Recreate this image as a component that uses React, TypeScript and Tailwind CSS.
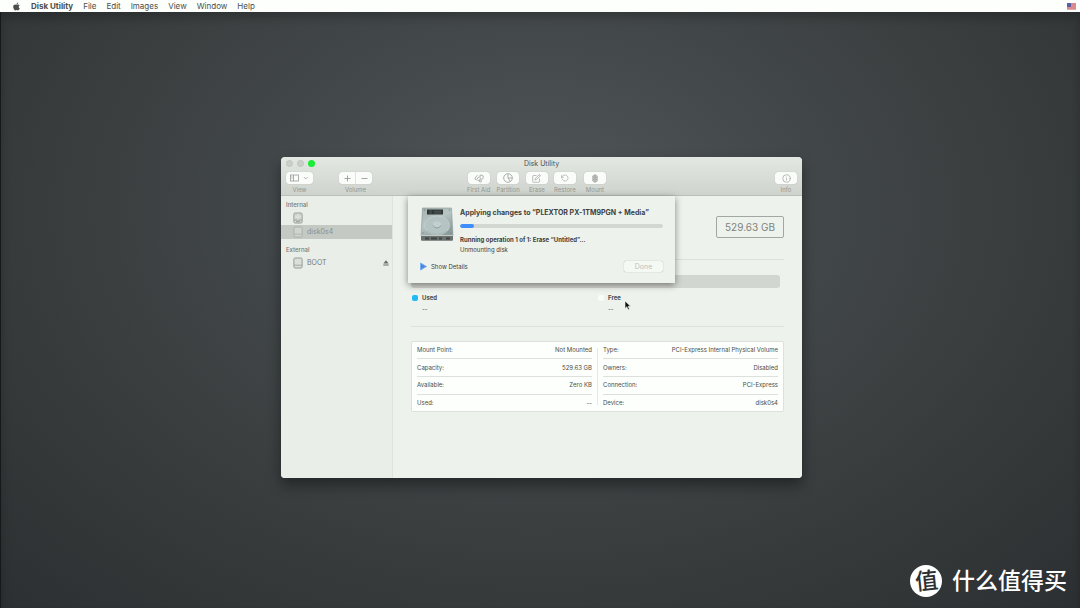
import React from "react";
import { FiRotateCcw, FiEdit, FiInfo } from "react-icons/fi";
import { FaApple } from "react-icons/fa";

const menus = ["File", "Edit", "Images", "View", "Window", "Help"];

const volumeInfo = [
  ["Mount Point:", "Not Mounted"],
  ["Capacity:", "529.63 GB"],
  ["Available:", "Zero KB"],
  ["Used:", "--"],
];

const deviceInfo = [
  ["Type:", "PCI-Express Internal Physical Volume"],
  ["Owners:", "Disabled"],
  ["Connection:", "PCI-Express"],
  ["Device:", "disk0s4"],
];

const DriveIcon: React.FC<{ internal?: boolean }> = ({ internal }) => (
  <svg width="10" height="12" viewBox="0 0 10 12" fill="none" stroke="#989c97">
    <rect x="0.9" y="1" width="8.2" height="10" rx="1.2" fill="#dce0da" />
    <path d="M1 8.2h8" strokeWidth="0.8" />
    {internal && <path d="M2.5 2.8h1M6.5 2.8h1M2.5 7h1M6.5 7h1M3 9.6h4" strokeWidth="0.9" />}
  </svg>
);

const HardDisk = () => (
  <svg width="34" height="35" viewBox="0 0 34 35">
    <defs>
      <linearGradient id="metal" x1="0" y1="0" x2="0.6" y2="1">
        <stop offset="0" stopColor="#a3b1af" />
        <stop offset="0.5" stopColor="#b7c6c4" />
        <stop offset="1" stopColor="#8b9d9c" />
      </linearGradient>
    </defs>
    <path d="M2.5 1h29L33 29H1z" fill="url(#metal)" stroke="#8b9694" strokeWidth="0.6" />
    <path d="M1 28.5h32v4.3q0 1-1 1H2q-1 0-1-1z" fill="#6a716f" />
    <path d="M1 28.5h32" stroke="#d2dad7" strokeWidth="0.8" />
    <path d="M5 31.5h4M11 31.5h6M19 31.5h3M26 31.5h4" stroke="#3f4544" strokeWidth="2" />
    <ellipse cx="17" cy="18.5" rx="12.5" ry="9.5" fill="#b4c4c2" stroke="#c9d5d2" strokeWidth="0.6" />
    <path d="M7 24q9 7 20 0" fill="none" stroke="#9fb0ae" strokeWidth="0.7" />
    <ellipse cx="17" cy="17.8" rx="4.4" ry="3.6" fill="#c2cfcc" />
    <path d="M12.8 18.5q4.2 5 8.4 0" fill="none" stroke="#869896" strokeWidth="0.9" />
    <rect x="7" y="2.5" width="16" height="5" fill="#303837" />
    <path d="M9 4h3M9 6h3M14 4.2h7M14 6h7" stroke="#5d6764" strokeWidth="0.7" />
    <g fill="#7d8784">
      <circle cx="4.5" cy="3" r="0.7" />
      <circle cx="29.5" cy="3" r="0.7" />
      <circle cx="3" cy="26" r="0.7" />
      <circle cx="31" cy="26" r="0.7" />
    </g>
  </svg>
);

const toolButton =
  "h-3 w-[22px] flex items-center justify-center rounded-[3px] bg-[#f9fcf8] text-[#a3a7a2] shadow-[0_0_1px_rgba(0,0,0,0.25)]";

const Tool: React.FC<{ label: string; children: React.ReactNode }> = ({ label, children }) => (
  <label className="flex flex-col items-center gap-0.5">
    <button className={toolButton}>{children}</button>
    <span className="text-[6px] leading-2 text-[#929691]">{label}</span>
  </label>
);

const InfoTable: React.FC<{ rows: string[][] }> = ({ rows }) => (
  <table className="h-[69px] w-full border-collapse">
    <tbody>
      {rows.map(([name, value]) => (
        <tr key={name} className="border-b border-[#dde1db] last:border-0">
          <th className="p-0 text-left font-normal">{name}</th>
          <td className="p-0 text-right">{value}</td>
        </tr>
      ))}
    </tbody>
  </table>
);

const MenuBar = () => (
  <nav className="h-3 px-3 flex items-center bg-[#fcfffb] text-[8px] leading-3 text-[#4b4e4b]">
    <FaApple size={9} className="text-[#4b4e4b]" />
    <a href="#" className="ml-2.5 font-bold">
      Disk Utility
    </a>
    <ul className="ml-2.5 flex gap-2.5">
      {menus.map((menu) => (
        <li key={menu}>
          <a href="#">{menu}</a>
        </li>
      ))}
    </ul>
    <svg width="9" height="7" viewBox="0 0 9 7" className="-mr-2 ml-auto">
      <rect width="9" height="7" fill="#e3a7aa" />
      <path d="M0 1h9M0 3h9M0 5h9" stroke="#cf6f78" />
      <rect width="4" height="4" fill="#5b5fa3" />
    </svg>
  </nav>
);

const Toolbar = () => (
  <header className="h-[39px] rounded-t-[4px] border-b border-[#bcc0ba] bg-gradient-to-b from-[#e4e8e2] to-[#cfd3cd]">
    <div className="h-[15px] px-[5px] pb-0.5 grid grid-cols-3 items-center">
      <div className="flex gap-1">
        <button aria-label="Close" className="size-[7px] rounded-full bg-[#cbcfca] border border-[#bfc3be]" />
        <button aria-label="Minimize" className="size-[7px] rounded-full bg-[#cbcfca] border border-[#bfc3be]" />
        <button aria-label="Zoom" className="size-[7px] rounded-full bg-[#18ee35]" />
      </div>
      <h1 className="text-center text-[7px] leading-3 text-[#4d504d]">Disk Utility</h1>
    </div>
    <div className="px-[5px] flex items-start">
      <label className="flex flex-col items-center gap-0.5">
        <button className="h-3 w-[27px] flex items-center justify-center gap-1 rounded-[3px] bg-[#f9fcf8] shadow-[0_0_1px_rgba(0,0,0,0.25)]">
          <svg width="19" height="8" viewBox="0 0 19 8" fill="none" stroke="#979b96" strokeWidth="0.8">
            <rect x="0.5" y="1" width="8" height="6" />
            <path d="M3.5 1v6M1.5 2.8h1M1.5 4.2h1M14 3.2l1.7 1.7 1.7-1.7" />
          </svg>
        </button>
        <span className="text-[6px] leading-2 text-[#929691]">View</span>
      </label>
      <label className="ml-[26px] flex flex-col items-center gap-0.5">
        <span className="h-3 flex rounded-[3px] bg-[#f9fcf8] shadow-[0_0_1px_rgba(0,0,0,0.25)]">
          <button aria-label="Add volume" className="w-[17px] flex items-center justify-center border-r border-[#dfe3dd]">
            <svg width="7" height="7" viewBox="0 0 7 7" stroke="#9a9e99" strokeWidth="0.9">
              <path d="M0.5 3.5h6M3.5 0.5v6" />
            </svg>
          </button>
          <button aria-label="Delete volume" className="w-4 flex items-center justify-center">
            <svg width="7" height="7" viewBox="0 0 7 7" stroke="#9a9e99" strokeWidth="0.9">
              <path d="M0.5 3.5h6" />
            </svg>
          </button>
        </span>
        <span className="text-[6px] leading-2 text-[#929691]">Volume</span>
      </label>
      <div className="ml-[95px] flex gap-1.5">
        <Tool label="First Aid">
          <svg width="10" height="9" viewBox="0 0 10 9" fill="none" stroke="currentColor" strokeWidth="0.9">
            <path d="M1 4.2L3.4 1.2M1 4.2q-.2 1.6 1.4 1.6M2.4 5.8L5 2.6M3.6 6.4q1.6.6 2-.9" />
            <path d="M6 1.2h1.5q2 0 1.8 2.2Q9 5 7.5 5.5M6 1.2v2.6q0 1 1.5 1.2" />
            <circle cx="6.3" cy="7" r="1.1" />
          </svg>
        </Tool>
        <Tool label="Partition">
          <svg width="10" height="10" viewBox="0 0 10 10" fill="none" stroke="currentColor" strokeWidth="0.9">
            <circle cx="5" cy="5" r="4.3" />
            <path d="M5 0.7V5h4.3M5 5l2.2 3.4" />
          </svg>
        </Tool>
        <Tool label="Erase">
          <FiEdit size={9} />
        </Tool>
        <Tool label="Restore">
          <FiRotateCcw size={8} />
        </Tool>
        <div className="ml-0.5">
          <Tool label="Mount">
            <svg width="6" height="9" viewBox="0 0 6 9" fill="#c3c7c2" stroke="currentColor" strokeWidth="0.7">
              <path d="M3 0.6L5.3 2v5L3 8.4 0.7 7V2zM1 3.2h4M1 5.2h4M3 1v7" />
            </svg>
          </Tool>
        </div>
      </div>
      <div className="ml-auto">
        <Tool label="Info">
          <FiInfo size={9} />
        </Tool>
      </div>
    </div>
  </header>
);

const Sidebar = () => (
  <aside className="w-28 shrink-0 border-r border-[#e0e4de] bg-[#eaeee8] pt-[5px] text-[7px] text-[#757975]">
    <h2 className="px-[5px] text-[6px] leading-2 font-medium">Internal</h2>
    <ul className="pt-0.5">
      <li className="h-[14px] px-3 flex items-center">
        <DriveIcon internal />
      </li>
      <li className="h-[14px] px-3 flex items-center gap-1 bg-[#c5c9c4] text-[#8b8f8a]">
        <span className="opacity-50">
          <DriveIcon />
        </span>
        disk0s4
      </li>
    </ul>
    <h2 className="mt-[7px] px-[5px] text-[6px] leading-2 font-medium">External</h2>
    <ul className="pt-0.5">
      <li className="h-[14px] pl-3 pr-[3px] flex items-center gap-1">
        <DriveIcon />
        BOOT
        <button aria-label="Eject BOOT" className="ml-auto">
          <svg width="6" height="6" viewBox="0 0 6 6" fill="#696d69">
            <path d="M3 0.3L5.7 3.5H0.3zM0.3 4.5h5.4v1H0.3z" />
          </svg>
        </button>
      </li>
    </ul>
  </aside>
);

const Sheet = () => (
  <section
    role="dialog"
    aria-label="Applying changes"
    className="absolute top-0 left-[15px] right-[127px] px-3 pt-[11px] pb-[11px] bg-[#edf2ec] text-[#3e413e] shadow-[0_2px_7px_rgba(0,0,0,0.45)]"
  >
    <div className="flex gap-1.5">
      <HardDisk />
      <div className="flex-1">
        <h2 className="text-[7px] leading-3 font-bold whitespace-nowrap">
          Applying changes to “PLEXTOR PX-1TM9PGN + Media”
        </h2>
        <div className="mt-[5px] h-1 rounded-full bg-[#d3d7d2] overflow-hidden">
          <div className="h-full bg-[#3f8efa] rounded-full" style={{ width: "7%" }} />
        </div>
        <p className="mt-[7px] text-[6px] leading-[10px] font-bold">Running operation 1 of 1: Erase “Untitled”...</p>
        <p className="text-[6px] leading-[10px]">Unmounting disk</p>
      </div>
    </div>
    <div className="mt-1.5 flex items-center justify-between">
      <button className="flex items-center gap-1 text-[6px] leading-2">
        <svg width="7" height="9" viewBox="0 0 7 9">
          <path d="M0.5 1v7L6.5 4.5z" fill="#4c86d6" stroke="#79aef0" strokeLinejoin="round" />
        </svg>
        Show Details
      </button>
      <button disabled className="h-[11px] w-[39px] rounded-[2px] bg-[#f5f9f4] text-[7px] leading-2 text-[#bdc1bc] shadow-[0_0_1px_rgba(0,0,0,0.4)]">
        Done
      </button>
    </div>
  </section>
);

const Detail = () => (
  <main className="relative flex-1 pl-[18px] pr-[18px] pt-5 bg-[#edf2ec] text-[6px] text-[#4a4d4a]">
    <div className="flex justify-end">
      <div className="h-[22px] w-[68px] flex items-center justify-center rounded-[2px] border border-[#a3a7a2] text-[10px] text-[#7f837e]">
        529.63 GB
      </div>
    </div>
    <div className="mt-[21px] h-px bg-[#dde1db]" />
    <div className="mt-[15px] mr-1 h-[13px] rounded-[3px] bg-[#d2d6d0]" />
    <dl className="mt-1 pl-px pb-3 grid grid-cols-2 border-b border-[#dde1db]">
      <div>
        <dt className="flex items-center gap-1 leading-3 font-bold">
          <span className="size-[6px] rounded-[2px] bg-[#20baf4]" />
          Used
        </dt>
        <dd className="pl-2.5 leading-[10px]">--</dd>
      </div>
      <div>
        <dt className="flex items-center gap-1 leading-3 font-bold">
          <span className="size-[6px] rounded-[2px] bg-[#f8fbf7]" />
          Free
        </dt>
        <dd className="pl-2.5 leading-[10px]">--</dd>
      </div>
    </dl>
    <div className="mt-3.5 px-[5px] flex gap-[5px] rounded-[2px] border border-[#dde1db] bg-[#fcfffb] leading-2">
      <div className="flex-1">
        <InfoTable rows={volumeInfo} />
      </div>
      <div className="my-1.5 w-px bg-[#e5e9e3]" />
      <div className="flex-1">
        <InfoTable rows={deviceInfo} />
      </div>
    </div>
    <Sheet />
  </main>
);

const App: React.FC = () => {
  return (
    <div className="min-h-screen flex flex-col overflow-hidden bg-[#303436] font-['Inter','Noto_Sans_CJK_SC',sans-serif]">
      <MenuBar />
      <div className="relative flex-1 border-l border-[#15191b] bg-[radial-gradient(640px_460px_at_50%_33%,#515659_0%,#414648_45%,#363a3b_85%,#2c3032_120%)] shadow-[inset_0_6px_8px_rgba(0,0,0,0.2)]">
        {/* Disk Utility window */}
        <div className="absolute left-[280px] top-[145px] w-[521px] h-[321px] flex flex-col overflow-hidden rounded-[4px] bg-[#edf2ec] shadow-[0_7px_14px_rgba(0,0,0,0.4)]">
          <Toolbar />
          <div className="flex-1 flex">
            <Sidebar />
            <Detail />
          </div>
        </div>

        {/* Mouse pointer */}
        <svg width="8" height="11" viewBox="0 0 8 11" className="absolute left-[623px] top-[288px]">
          <path d="M1 1v7.5l1.8-1.7 1.3 3 1.3-.6-1.3-2.9h2.5z" fill="#111" stroke="#f4f6f3" strokeWidth="0.6" />
        </svg>

        {/* Watermark */}
        <div className="absolute right-[13px] bottom-[11px] flex items-center gap-2.5 text-[23px] leading-8 font-medium text-white">
          <span className="size-8 flex items-center justify-center rounded-full bg-white text-[#2c3032]">
            <span className="-rotate-6">值</span>
          </span>
          <span>什么值得买</span>
        </div>
      </div>
    </div>
  );
};

export default App;
